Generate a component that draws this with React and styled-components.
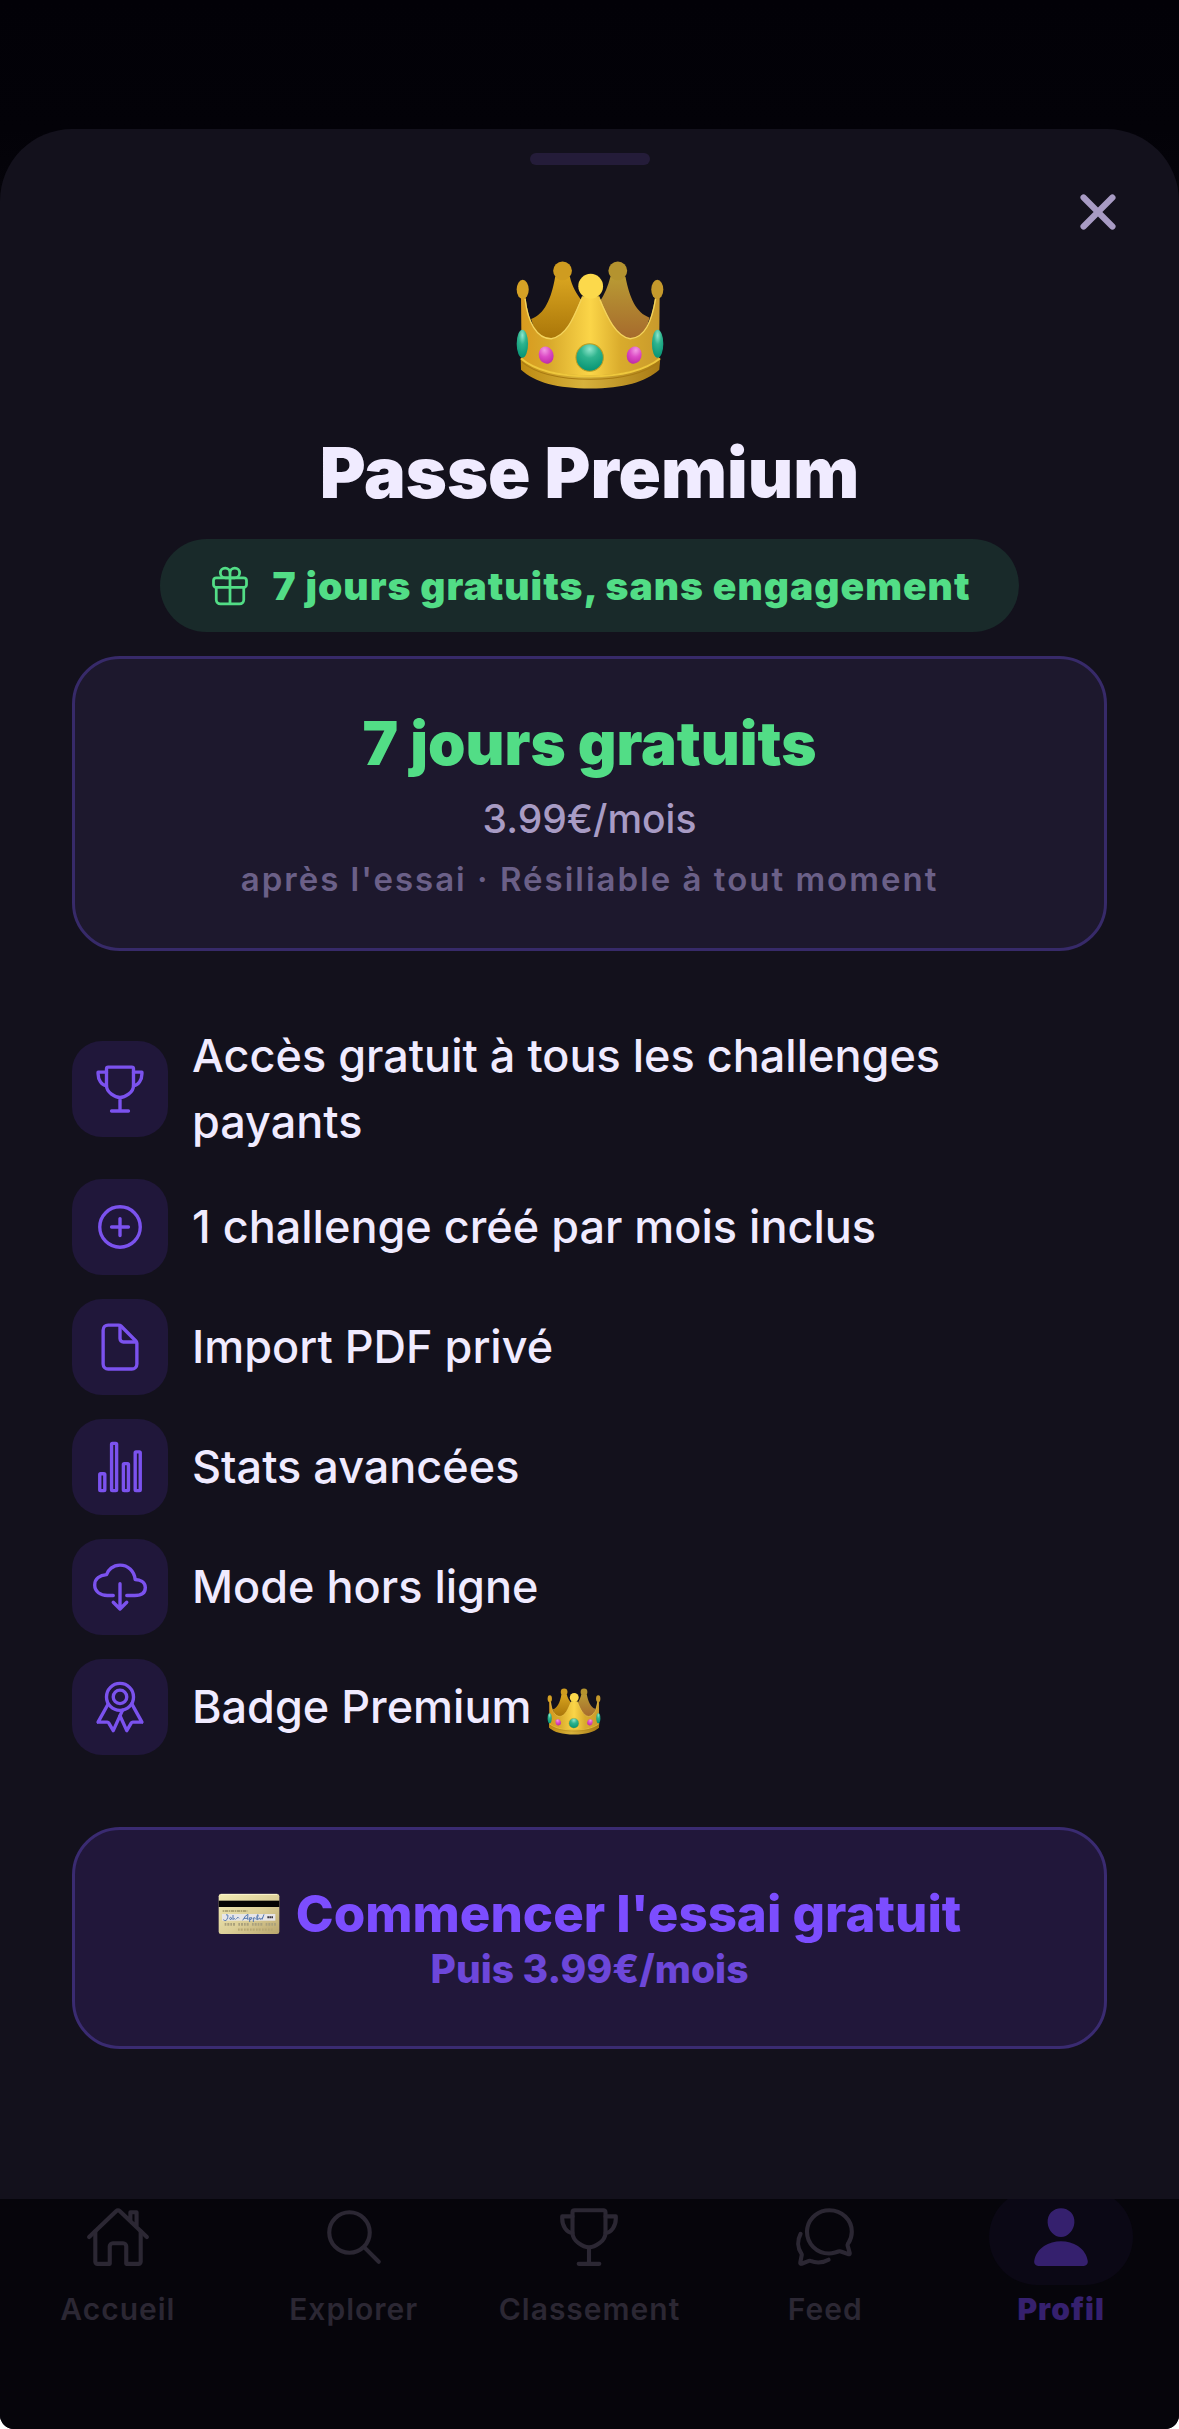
import React from 'react';
import styled, { createGlobalStyle } from 'styled-components';
import {
  IoAddCircleOutline,
  IoChatbubblesOutline,
  IoClose,
  IoCloudDownloadOutline,
  IoDocumentOutline,
  IoGiftOutline,
  IoHomeOutline,
  IoPerson,
  IoRibbonOutline,
  IoSearchOutline,
  IoStatsChartOutline,
  IoTrophyOutline,
} from 'react-icons/io5';

const GlobalStyle = createGlobalStyle`
  * {
    box-sizing: border-box;
  }

  body {
    margin: 0;
    background: #ffffff;
    font-family: Inter, "Liberation Sans", sans-serif;
  }

  h1, p, ul {
    margin: 0;
    padding: 0;
  }

  svg {
    display: block;
    flex-shrink: 0;
  }
`;

const Screen = styled.div`
  display: flex;
  flex-direction: column;
  min-height: 100vh;
  padding-top: 129px;
  background: linear-gradient(#020107, #030208 129px, #06050b 220px);
  border-radius: 0 0 14px 14px;
  overflow: hidden;
`;

const Sheet = styled.main`
  display: flex;
  flex-direction: column;
  padding: 24px 72px 150px;
  background: #13111c;
  border-radius: 72px 72px 0 0;
`;

const Handle = styled.div`
  align-self: center;
  width: 120px;
  height: 12px;
  border-radius: 6px;
  background: #241c39;
`;

const CloseButton = styled.button`
  align-self: flex-end;
  margin: 14px -24px 0 0;
  padding: 0;
  border: none;
  background: none;
  color: #a89bc4;
  font-size: 66px;
  cursor: pointer;
`;

const Hero = styled.header`
  display: flex;
  flex-direction: column;
  align-items: center;
  padding-top: 15px;
`;

const Title = styled.h1`
  margin: 40px 0 24px;
  color: #f0ebff;
  font-size: 70px;
  font-weight: 900;
  line-height: 85px;
`;

const TrialPill = styled.p`
  display: flex;
  align-items: center;
  gap: 20px;
  padding: 24px 48px;
  border-radius: 48px;
  background: #192a2a;
  color: #52dd86;
  font-size: 39px;
  font-weight: 900;
  line-height: 45px;
  letter-spacing: 1px;

  svg {
    font-size: 44px;
  }
`;

const PriceCard = styled.section`
  display: flex;
  flex-direction: column;
  gap: 16px;
  margin-top: 24px;
  padding: 48px;
  border: 3px solid #372a69;
  border-radius: 48px;
  background: #1d182d;
  text-align: center;
`;

const Offer = styled.p`
  color: #52dd86;
  font-size: 60px;
  font-weight: 900;
  line-height: 72px;
`;

const Price = styled.p`
  color: #a89bc4;
  font-size: 39px;
  font-weight: 500;
  line-height: 48px;
`;

const Terms = styled.p`
  color: #6b6088;
  font-size: 33px;
  font-weight: 600;
  line-height: 41px;
  letter-spacing: 2px;
`;

const FeatureList = styled.ul`
  display: flex;
  flex-direction: column;
  gap: 24px;
  margin: 72px 0;
  list-style: none;
`;

const Feature = styled.li`
  display: flex;
  align-items: center;
  gap: 24px;
  color: #f0ebff;
  font-size: 45px;
  font-weight: 500;
  line-height: 66px;
`;

const FeatureIcon = styled.span`
  display: flex;
  align-items: center;
  justify-content: center;
  flex-shrink: 0;
  width: 96px;
  height: 96px;
  border-radius: 30px;
  background: #20173a;
  color: #7b52ee;
  font-size: 54px;
`;

const FeatureText = styled.span`
  display: flex;
  align-items: center;
  gap: 16px;
  max-width: 820px;

  svg {
    margin-top: 8px;
  }
`;

const SubscribeButton = styled.button`
  display: flex;
  flex-direction: column;
  align-items: center;
  padding: 53px 48px;
  border: 3px solid #3a2b71;
  border-radius: 48px;
  background: #21173a;
  color: #7c4dff;
  font-family: inherit;
  font-weight: 800;
  cursor: pointer;
`;

const SubscribeLabel = styled.span`
  display: flex;
  align-items: center;
  gap: 16px;
  font-size: 51px;
  line-height: 62px;
`;

const SubscribeHint = styled.span`
  color: #6d47da;
  font-size: 39px;
  line-height: 48px;
`;

const TabBar = styled.nav`
  display: flex;
  flex: 1;
  min-height: 200px;
  overflow: hidden;
  background: #06050b;
`;

const Tab = styled.a`
  display: flex;
  flex: 1;
  flex-direction: column;
  align-items: center;
  gap: 6px;
  color: ${props => (props.$active ? '#35206e' : '#2b2733')};
  font-size: 30px;
  font-weight: ${props => (props.$active ? 900 : 600)};
  line-height: 36px;
  letter-spacing: 1px;
  text-decoration: none;
`;

/* The top of the active halo slides under the sheet */
const TabIcon = styled.span`
  display: flex;
  align-items: center;
  justify-content: center;
  width: 144px;
  height: 96px;
  margin-top: -10px;
  border-radius: 48px;
  background: ${props => (props.$active ? '#0b0815' : 'transparent')};
  font-size: 66px;
`;

const Crown = ({ id, width, height }) => (
  <svg width={width} height={height} viewBox="40 62 448 388" role="img" aria-label="Couronne">
    <defs>
      <linearGradient id={`${id}-front`} x1="0" x2="1" y1="0" y2="0">
        <stop offset="0" stopColor="#d99a1e" />
        <stop offset="0.2" stopColor="#d8a92b" />
        <stop offset="0.5" stopColor="#fbd548" />
        <stop offset="0.72" stopColor="#d9ab2c" />
        <stop offset="1" stopColor="#c99a2c" />
      </linearGradient>
      <linearGradient id={`${id}-left`} x1="0" x2="0" y1="0" y2="1">
        <stop offset="0" stopColor="#d9a520" />
        <stop offset="1" stopColor="#a87408" />
      </linearGradient>
      <linearGradient id={`${id}-right`} x1="0" x2="0" y1="0" y2="1">
        <stop offset="0" stopColor="#b99a34" />
        <stop offset="1" stopColor="#a5682c" />
      </linearGradient>
      <linearGradient id={`${id}-rim`} x1="0" x2="1" y1="0" y2="0">
        <stop offset="0" stopColor="#bd8a12" />
        <stop offset="0.45" stopColor="#d7b23c" />
        <stop offset="1" stopColor="#a87a14" />
      </linearGradient>
      <radialGradient id={`${id}-green`} cx="0.5" cy="0.2" r="0.8">
        <stop offset="0" stopColor="#8fe6cc" />
        <stop offset="0.4" stopColor="#2fb48e" />
        <stop offset="1" stopColor="#069374" />
      </radialGradient>
      <radialGradient id={`${id}-pink`} cx="0.5" cy="0.2" r="0.8">
        <stop offset="0" stopColor="#f39be4" />
        <stop offset="0.5" stopColor="#dc4bc6" />
        <stop offset="1" stopColor="#bd2ca6" />
      </radialGradient>
    </defs>
    <path d="M88 238C128 224 148 180 160 112L204 112C210 140 224 164 240 184L225 305L110 305Z" fill={`url(#${id}-left)`} />
    <path d="M442 234C402 220 382 176 370 112L325 112C318 140 308 164 292 188L312 305L420 305Z" fill={`url(#${id}-right)`} />
    <circle cx="182" cy="94" r="28" fill="#cf9c20" />
    <circle cx="347" cy="94" r="28" fill="#b4932f" />
    <path
      d="M58 174H72C78 246 104 297 148 297C194 290 216 232 240 170H292C316 234 342 290 384 297C428 294 448 246 458 174H472L470 388Q420 428 265 428Q106 428 60 388Z"
      fill={`url(#${id}-front)`}
    />
    <path d="M70 178C78 246 104 297 148 297C194 290 216 232 238 180M293 180C316 234 342 290 384 297C428 294 448 246 460 178" fill="none" stroke="#f4d45c" strokeWidth="4" />
    <ellipse cx="63" cy="150" rx="18" ry="29" fill="#d5a125" />
    <ellipse cx="465" cy="150" rx="18" ry="29" fill="#c5992c" />
    <circle cx="266" cy="140" r="37" fill="#fcd94b" />
    <path d="M57 354C100 390 168 406 265 406C364 406 430 388 474 354L471 390C430 426 364 446 265 446C166 446 100 428 58 390Z" fill={`url(#${id}-rim)`} />
    <path d="M58 356C100 392 168 409 265 409C364 409 430 390 473 356" fill="none" stroke="#efc83d" strokeWidth="6" />
    <path d="M60 366C102 401 168 418 265 418C364 418 430 399 471 366" fill="none" stroke="#a97b13" strokeWidth="3" />
    <ellipse cx="62" cy="312" rx="17" ry="42" fill={`url(#${id}-green)`} />
    <ellipse cx="466" cy="312" rx="17" ry="42" fill={`url(#${id}-green)`} />
    <circle cx="263" cy="353" r="41" fill={`url(#${id}-green)`} stroke="#bd9d22" strokeWidth="3" />
    <ellipse cx="133" cy="346" rx="22" ry="26" transform="rotate(-18 133 346)" fill={`url(#${id}-pink)`} />
    <ellipse cx="396" cy="346" rx="22" ry="26" transform="rotate(18 396 346)" fill={`url(#${id}-pink)`} />
  </svg>
);

const BankCard = () => (
  <svg width="62" height="42" viewBox="0 0 186 126" role="img" aria-label="Carte bancaire">
    <defs>
      <linearGradient id="card-face" x1="0" x2="1" y1="0" y2="1">
        <stop offset="0" stopColor="#f3ebb4" />
        <stop offset="0.55" stopColor="#dccf98" />
        <stop offset="1" stopColor="#b9a56c" />
      </linearGradient>
    </defs>
    <rect x="2" y="3" width="182" height="120" rx="7" fill="url(#card-face)" />
    <path d="M8 4H178" stroke="#fff8cf" strokeWidth="3" />
    <rect x="2" y="23" width="182" height="19" fill="#050403" />
    <path d="M14 54H88" stroke="#7d724a" strokeWidth="3" strokeDasharray="5 2 9 2" />
    <rect x="12" y="63" width="160" height="20" fill="#e6e5e8" />
    <path
      d="M24 66q8-4 5 8q-4 14-13 6M34 77q4-8 7-2q-1 8-6 3M45 66v14q4-8 7 0M55 77q6-8 8-1M74 82q8-16 16-18q-2 8 0 17M78 76h12M95 73v14M95 76q8-6 6 2l-5 2M106 74v13M106 76q7-5 5 3M116 80q7-16 3-15q-5 6-1 15q5-1 6-5q3-1 2 4q5-1 8-6M138 64l-6 16"
      fill="none"
      stroke="#5679b0"
      strokeWidth="3"
    />
    <path d="M148 73H166" stroke="#3c3940" strokeWidth="6" strokeDasharray="5 1" />
    <path d="M20 94H176" stroke="#aaa17c" strokeWidth="8" strokeDasharray="5 3 6 3 5 3 6 10" />
    <path d="M60 110H168" stroke="#b7a873" strokeWidth="7" strokeDasharray="5 3 6 4" />
  </svg>
);

const features = [
  { icon: IoTrophyOutline, text: 'Accès gratuit à tous les challenges payants' },
  { icon: IoAddCircleOutline, text: '1 challenge créé par mois inclus' },
  { icon: IoDocumentOutline, text: 'Import PDF privé' },
  { icon: IoStatsChartOutline, text: 'Stats avancées' },
  { icon: IoCloudDownloadOutline, text: 'Mode hors ligne' },
  { icon: IoRibbonOutline, text: 'Badge Premium', crown: true },
];

const tabs = [
  { icon: IoHomeOutline, label: 'Accueil', href: '#accueil' },
  { icon: IoSearchOutline, label: 'Explorer', href: '#explorer' },
  { icon: IoTrophyOutline, label: 'Classement', href: '#classement' },
  { icon: IoChatbubblesOutline, label: 'Feed', href: '#feed' },
  { icon: IoPerson, label: 'Profil', href: '#profil', active: true },
];

const App = () => {
  return (
    <>
      <GlobalStyle />
      <Screen>
        <Sheet>
          <Handle />
          <CloseButton type="button" aria-label="Fermer">
            <IoClose />
          </CloseButton>
          <Hero>
            <Crown id="hero" width={150} height={130} />
            <Title>Passe Premium</Title>
            <TrialPill>
              <IoGiftOutline />
              7 jours gratuits, sans engagement
            </TrialPill>
          </Hero>
          <PriceCard>
            <Offer>7 jours gratuits</Offer>
            <Price>3.99€/mois</Price>
            <Terms>après l'essai · Résiliable à tout moment</Terms>
          </PriceCard>
          <FeatureList>
            {features.map(({ icon: Icon, text, crown }) => (
              <Feature key={text}>
                <FeatureIcon>
                  <Icon />
                </FeatureIcon>
                <FeatureText>
                  {text}
                  {crown && <Crown id="badge" width={54} height={47} />}
                </FeatureText>
              </Feature>
            ))}
          </FeatureList>
          <SubscribeButton type="button">
            <SubscribeLabel>
              <BankCard />
              Commencer l'essai gratuit
            </SubscribeLabel>
            <SubscribeHint>Puis 3.99€/mois</SubscribeHint>
          </SubscribeButton>
        </Sheet>
        <TabBar>
          {tabs.map(({ icon: Icon, label, href, active }) => (
            <Tab key={label} href={href} $active={active}>
              <TabIcon $active={active}>
                <Icon />
              </TabIcon>
              {label}
            </Tab>
          ))}
        </TabBar>
      </Screen>
    </>
  );
};

export default App;
